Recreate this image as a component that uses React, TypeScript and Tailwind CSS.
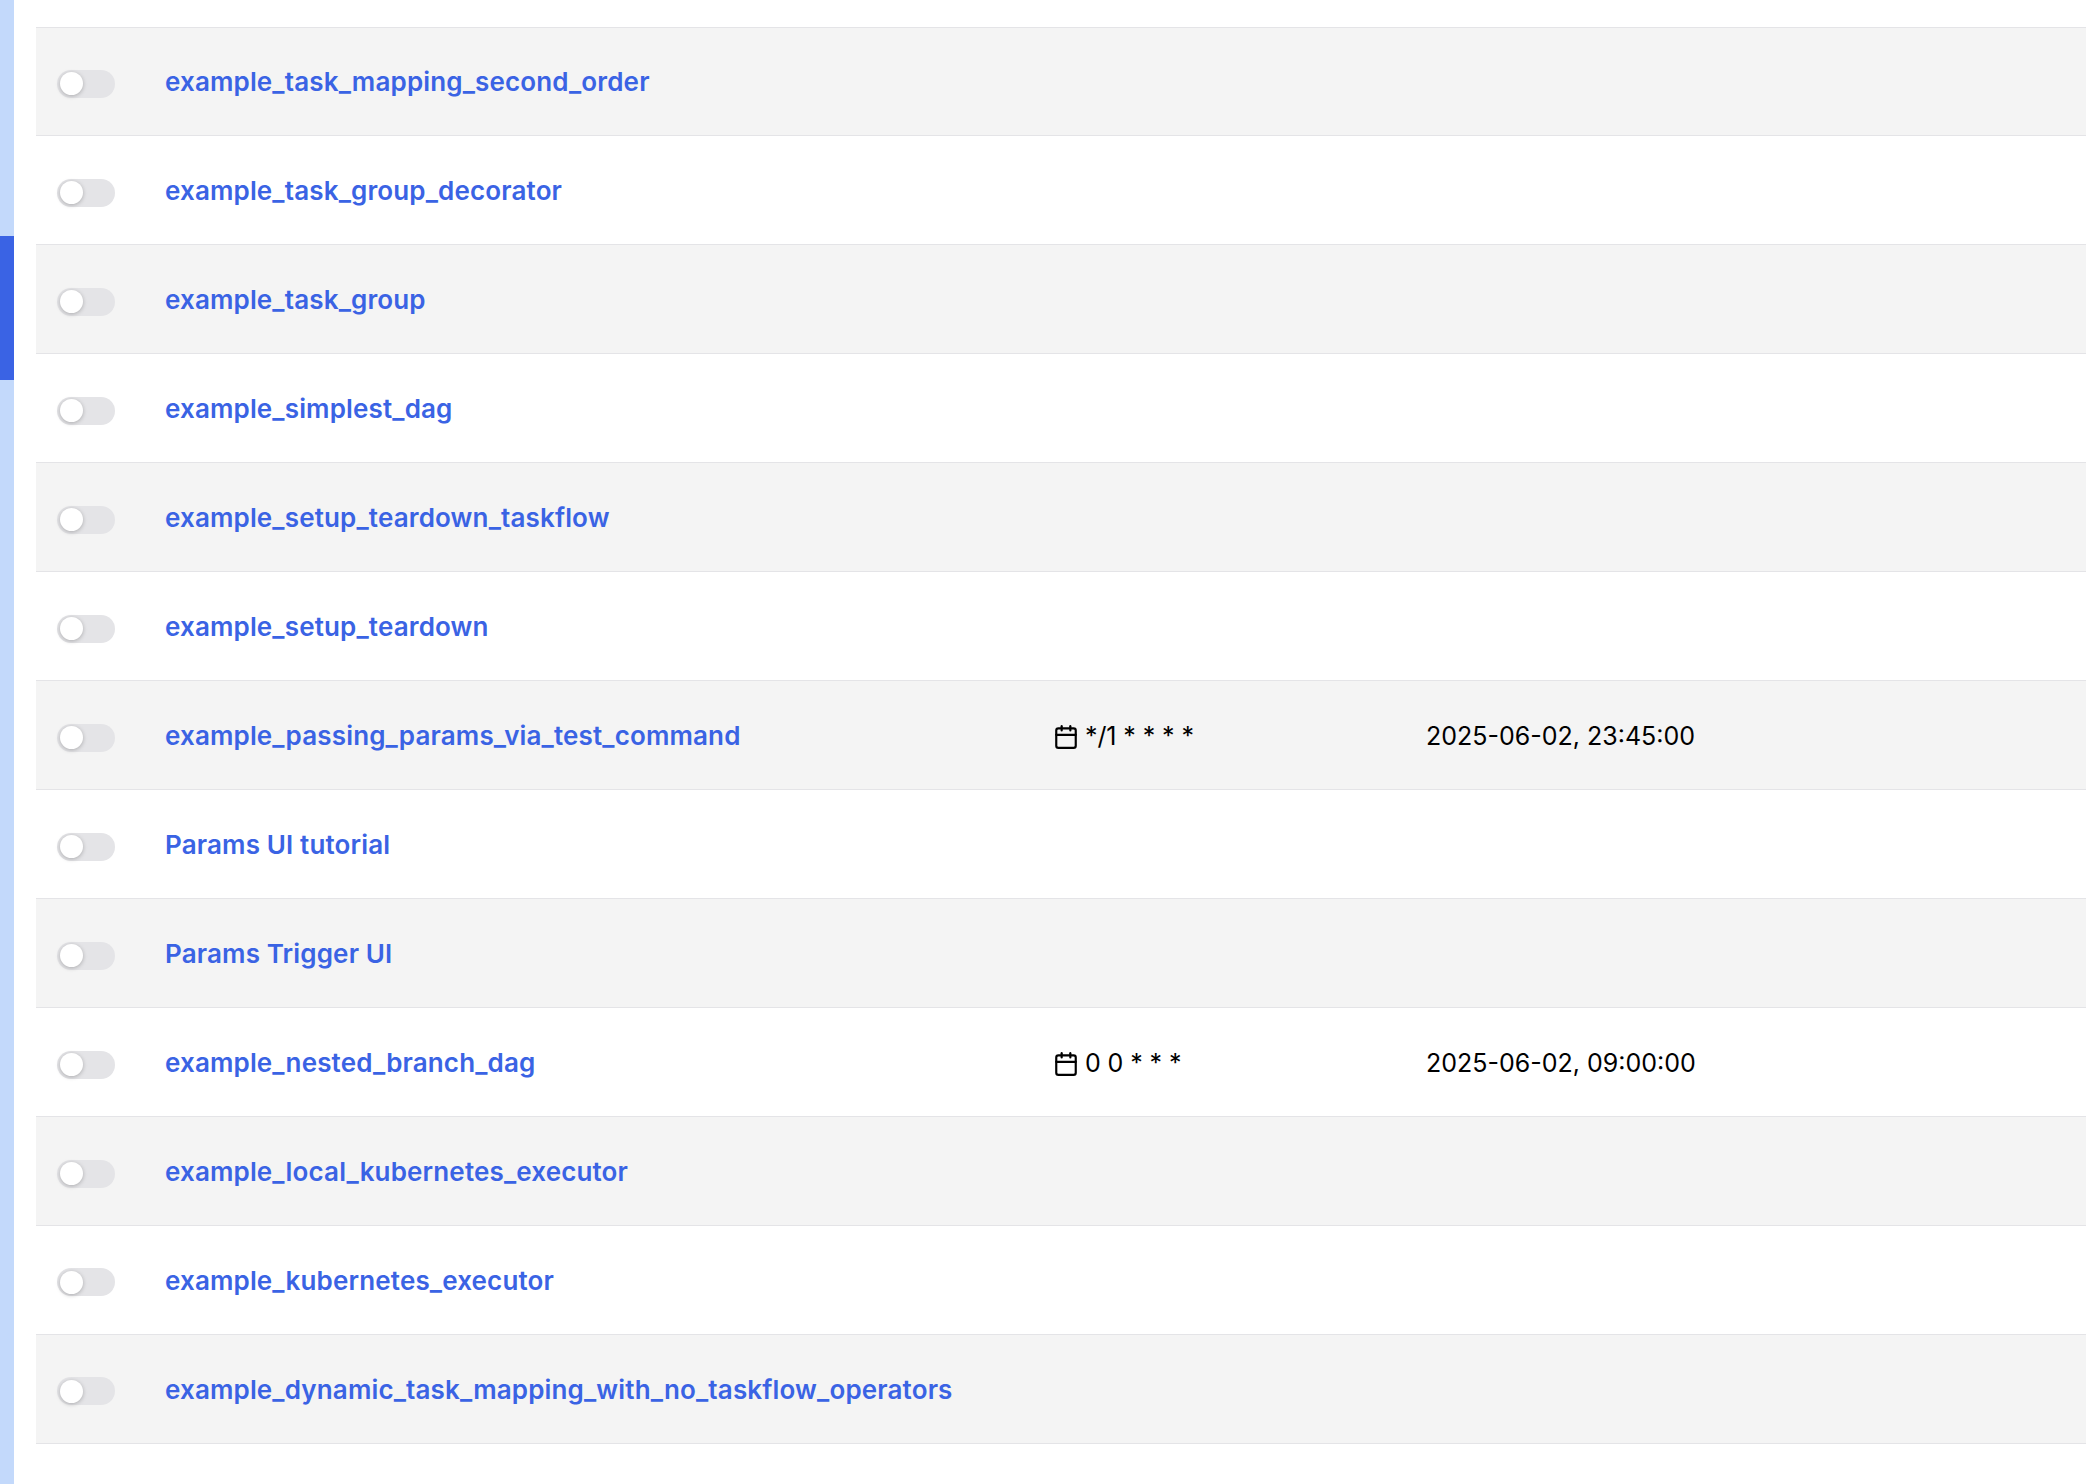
import { FiCalendar } from 'react-icons/fi'

interface DagRow {
  name: string
  schedule?: string
  nextRun?: string
}

const dags: DagRow[] = [
  { name: 'example_task_mapping_second_order' },
  { name: 'example_task_group_decorator' },
  { name: 'example_task_group' },
  { name: 'example_simplest_dag' },
  { name: 'example_setup_teardown_taskflow' },
  { name: 'example_setup_teardown' },
  { name: 'example_passing_params_via_test_command', schedule: '*/1 * * * *', nextRun: '2025-06-02, 23:45:00' },
  { name: 'Params UI tutorial' },
  { name: 'Params Trigger UI' },
  { name: 'example_nested_branch_dag', schedule: '0 0 * * *', nextRun: '2025-06-02, 09:00:00' },
  { name: 'example_local_kubernetes_executor' },
  { name: 'example_kubernetes_executor' },
  { name: 'example_dynamic_task_mapping_with_no_taskflow_operators' },
]

const Toggle = () => (
  <div className="relative mt-[1px] h-[28px] w-[58px] shrink-0 rounded-full bg-[#e4e4e7]">
    <div className="absolute left-[3px] top-[2.5px] h-[23px] w-[23px] rounded-full bg-white shadow-[0_1px_4px_rgba(0,0,0,0.25)]" />
  </div>
)

export default function App() {
  return (
    <div className="flex h-[1484px] overflow-hidden bg-white font-['Inter',sans-serif]">
      {/* Scrollbar */}
      <div className="h-full w-[14px] shrink-0 bg-[#c3d9fb]">
        <div className="mt-[236px] h-[144px] bg-[#3a63e4]" />
      </div>

      <div className="ml-[22px] mt-[26.5px] flex-1 border-t border-[#e4e4e7]">
        {dags.map((dag, i) => (
          <div
            key={dag.name}
            className={`flex h-[108.96px] items-center border-b border-[#e4e4e7] pl-[21px] pt-[4px] ${i % 2 === 0 ? 'bg-[#f4f4f4]' : 'bg-white'}`}
          >
            <Toggle />
            <a className="mb-[3px] ml-[50px] w-[888px] shrink-0 text-[26px] font-semibold tracking-[0.15px] text-[#3a63e4]">{dag.name}</a>
            {dag.schedule && (
              <div className="flex w-[373px] shrink-0 items-center gap-[6px] text-[25px] text-black">
                <FiCalendar size={26} className="shrink-0" />
                <span className="tracking-[-0.1px]">{dag.schedule}</span>
              </div>
            )}
            {dag.nextRun && <span className="text-[25px] text-black">{dag.nextRun}</span>}
          </div>
        ))}
      </div>
    </div>
  )
}
